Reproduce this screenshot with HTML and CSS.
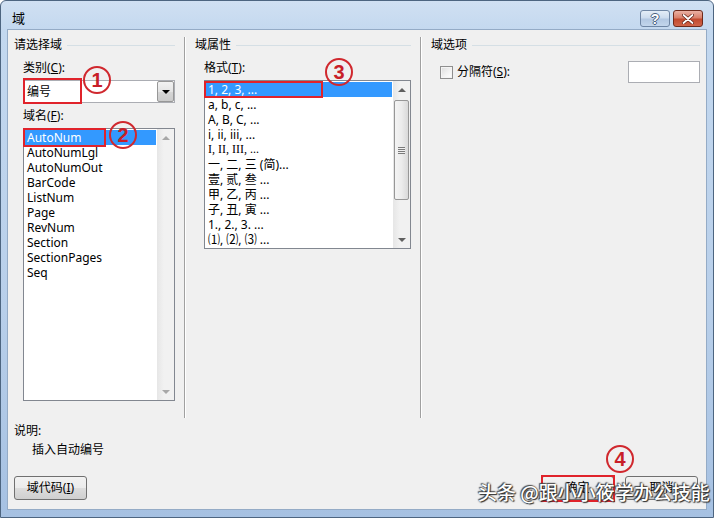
FILE: index.html
```html
<!DOCTYPE html>
<html lang="zh-CN">
<head>
<meta charset="utf-8">
<title>域</title>
<link rel="stylesheet" href="styles.css">
</head>
<body>
<div class="window">
  <div class="titlebar">
    <span class="title">域</span>
    <div class="caption">
      <span class="cbtn help">?</span>
      <span class="cbtn close">
        <svg width="12" height="10" viewBox="0 0 12 10"><path d="M1.5 1 L10.5 9 M10.5 1 L1.5 9" stroke="#5a1a10" stroke-width="3.2" stroke-linecap="round"/><path d="M1.5 1 L10.5 9 M10.5 1 L1.5 9" stroke="#fff" stroke-width="1.8" stroke-linecap="round"/></svg>
      </span>
    </div>
  </div>
  <div class="client">
    <div class="columns">
      <section class="col col1">
        <div class="group-head">请选择域</div>
        <div class="label">类别(<u>C</u>):</div>
        <div class="combo">
          <span class="combo-text">编号</span>
          <span class="combo-btn"><i class="arr-down dark"></i></span>
        </div>
        <div class="label label2">域名(<u>F</u>):</div>
        <div class="listbox names">
          <div class="items">
            <div class="item sel">AutoNum</div>
            <div class="item">AutoNumLgl</div>
            <div class="item">AutoNumOut</div>
            <div class="item">BarCode</div>
            <div class="item">ListNum</div>
            <div class="item">Page</div>
            <div class="item">RevNum</div>
            <div class="item">Section</div>
            <div class="item">SectionPages</div>
            <div class="item">Seq</div>
          </div>
          <div class="scrollbar">
            <span class="sb-btn"><i class="arr-up off"></i></span>
            <span class="track"></span>
            <span class="sb-btn"><i class="arr-down off"></i></span>
          </div>
        </div>
      </section>
      <div class="sep"></div>
      <section class="col col2">
        <div class="group-head">域属性</div>
        <div class="label">格式(<u>T</u>):</div>
        <div class="listbox formats">
          <div class="items">
            <div class="item sel">1, 2, 3, ...</div>
            <div class="item">a, b, c, ...</div>
            <div class="item">A, B, C, ...</div>
            <div class="item">i, ii, iii, ...</div>
            <div class="item serif">I, II, III, ...</div>
            <div class="item">一, 二, 三 (简)...</div>
            <div class="item">壹, 贰, 叁 ...</div>
            <div class="item">甲, 乙, 丙 ...</div>
            <div class="item">子, 丑, 寅 ...</div>
            <div class="item">1., 2., 3. ...</div>
            <div class="item">⑴, ⑵, ⑶ ...</div>
          </div>
          <div class="scrollbar">
            <span class="sb-btn"><i class="arr-up"></i></span>
            <span class="track"><span class="thumb"><i class="grip"></i></span></span>
            <span class="sb-btn"><i class="arr-down"></i></span>
          </div>
        </div>
      </section>
      <div class="sep"></div>
      <section class="col col3">
        <div class="group-head">域选项</div>
        <div class="option-row">
          <span class="checkbox"></span>
          <span class="opt-label">分隔符(<u>S</u>):</span>
          <span class="textbox"></span>
        </div>
      </section>
    </div>
    <div class="desc">
      <div>说明:</div>
      <div class="desc-text">插入自动编号</div>
    </div>
    <div class="buttons">
      <span class="btn">域代码(<u>I</u>)</span>
      <span class="spacer"></span>
      <span class="btn">确定</span>
      <span class="btn">取消</span>
    </div>
  </div>
</div>

<div class="rbox rb1"></div>
<div class="rbox rb2"></div>
<div class="rbox rb3"></div>
<div class="rbox rb4"></div>
<div class="mark m1">1</div>
<div class="mark m2">2</div>
<div class="mark m3">3</div>
<div class="mark m4">4</div>
<div class="watermark">头条 @跟小小筱学办公技能</div>
</body>
</html>
```

FILE: styles.css
```css
* { box-sizing: border-box; margin: 0; padding: 0; }
html, body { width: 714px; height: 518px; overflow: hidden; }
body {
  font-family: "Noto Sans", "Noto Sans CJK SC", sans-serif;
  font-size: 12px;
  color: #000;
  background: #fff;
}
u { text-decoration: underline; text-underline-offset: 1px; }

.window {
  width: 714px;
  height: 518px;
  display: flex;
  flex-direction: column;
  background: linear-gradient(180deg, #d0e0f2 0px, #c3d8ef 30px, #b8cfea 60%, #a6c1e2 100%);
  border: 1px solid #4d6580;
  border-radius: 6px 6px 0 0;
}

.titlebar {
  height: 29px;
  display: flex;
  align-items: flex-start;
  padding-left: 11px;
}
.title {
  margin-top: 9px;
  line-height: 16px;
  font-size: 13px;
  font-family: "Noto Sans CJK SC", sans-serif;
}
.caption {
  margin-left: auto;
  margin-top: 9px;
  margin-right: 10px;
  display: flex;
  gap: 3px;
}
.cbtn {
  width: 30px;
  height: 17px;
  border-radius: 3px;
  display: flex;
  align-items: center;
  justify-content: center;
}
.help {
  background: linear-gradient(180deg, #e4edf7 0%, #cddcee 45%, #b3c8e2 55%, #c3d6ec 100%);
  border: 1px solid #6f86a4;
  color: #ffffff;
  font: bold 14px/1 "Liberation Sans", sans-serif;
  text-shadow: 1px 0 0 #4a6280, -1px 0 0 #4a6280, 0 1px 0 #4a6280, 0 -1px 0 #4a6280;
}
.close {
  background: linear-gradient(180deg, #eab1a4 0%, #d9806b 45%, #c24a2f 55%, #d0654a 100%);
  border: 1px solid #6e2a1c;
}

.client {
  flex: 1;
  margin: 0 7px 8px;
  background: #f0f0f0;
  display: flex;
  flex-direction: column;
  box-shadow: 0 0 0 1px #94abc6;
}

.columns {
  display: flex;
  margin-top: 7px;
  height: 381px;
}
.col { display: flex; flex-direction: column; }
.col1 { width: 176px; padding: 0 9px 0 6px; }
.col2 { width: 235px; padding: 0 9px 0 10px; }
.col3 { flex: 1; padding: 0 6px 0 10px; }
.sep {
  width: 1px;
  background: #a0a0a0;
  box-shadow: 1px 0 0 #ffffff;
}

.group-head {
  display: flex;
  align-items: center;
  gap: 5px;
  line-height: 16px;
  white-space: nowrap;
}
.group-head::after {
  content: "";
  flex: 1;
  height: 1px;
  background: #d5dfe5;
}

.label {
  margin-top: 7px;
  padding-left: 9px;
  line-height: 16px;
}
.label2 { margin-top: 5px; }

.combo {
  margin-top: 4px;
  margin-left: 9px;
  height: 23px;
  border: 1px solid #abadb3;
  background: #fff;
  display: flex;
  align-items: stretch;
}
.combo-text {
  flex: 1;
  padding-left: 3px;
  line-height: 21px;
}
.combo-btn {
  width: 17px;
  display: flex;
  align-items: center;
  justify-content: center;
  background: linear-gradient(180deg, #f2f2f2 0%, #e4e4e4 50%, #d6d6d6 51%, #cbcbcb 100%);
  border: 1px solid #979797;
  border-radius: 2px;
}

.listbox {
  margin-top: 4px;
  margin-left: 9px;
  display: flex;
  border: 1px solid #828790;
  background: #fff;
}
.names { height: 273px; }
.formats { height: 169px; }
.items {
  flex: 1;
  padding: 1px;
  min-width: 0;
}
.item {
  height: 15px;
  line-height: 15px;
  padding-left: 2px;
  white-space: nowrap;
}
.item.sel { background: #3399ff; color: #fff; }
.item.serif { font-family: "Liberation Serif", serif; }

.scrollbar {
  width: 17px;
  display: flex;
  flex-direction: column;
  background: linear-gradient(90deg, #e6e6e6 0%, #f1f1f1 40%, #f1f1f1 100%);
}
.sb-btn {
  height: 17px;
  display: flex;
  align-items: center;
  justify-content: center;
}
.track { flex: 1; display: flex; flex-direction: column; }
.thumb {
  margin: 2px 1px 0 1px;
  height: 100px;
  border: 1px solid #979797;
  border-radius: 2px;
  background: linear-gradient(90deg, #f4f4f4 0%, #ececec 50%, #d9d9d9 100%);
  display: flex;
  align-items: center;
  justify-content: center;
}
.grip {
  width: 7px;
  height: 7px;
  background: repeating-linear-gradient(180deg, #7a7a7a 0 1px, #f0f0f0 1px 2px);
}
.arr-up, .arr-down {
  width: 0;
  height: 0;
  border-left: 4px solid transparent;
  border-right: 4px solid transparent;
}
.arr-up { border-bottom: 4px solid #606060; }
.arr-down { border-top: 4px solid #606060; }
.arr-up.off { border-bottom-color: #a8a8a8; }
.arr-down.off { border-top-color: #a8a8a8; }
.arr-down.dark { border-top-color: #000; }

.option-row {
  margin-top: 8px;
  padding-left: 9px;
  height: 22px;
  display: flex;
  align-items: center;
}
.checkbox {
  width: 13px;
  height: 13px;
  border: 1px solid #8f8f8f;
  background: linear-gradient(135deg, #dcdcdc 0%, #f4f4f4 60%, #ffffff 100%);
  box-shadow: inset 0 0 0 1px #f4f4f4;
}
.opt-label { margin-left: 4px; line-height: 16px; }
.textbox {
  margin-left: auto;
  width: 72px;
  height: 22px;
  border: 1px solid #abadb3;
  background: #fff;
}

.desc {
  margin-top: 5px;
  padding-left: 6px;
  line-height: 16px;
}
.desc-text {
  margin-top: 3px;
  padding-left: 18px;
}

.buttons {
  display: flex;
  gap: 11px;
  margin-top: 18px;
  padding: 0 8px 0 6px;
  height: 24px;
}
.spacer { flex: 1; margin-left: -11px; }
.btn {
  width: 73px;
  height: 24px;
  border: 1px solid #707070;
  border-radius: 3px;
  background: linear-gradient(180deg, #f2f2f2 0%, #ebebeb 50%, #dddddd 51%, #cfcfcf 100%);
  display: flex;
  align-items: center;
  justify-content: center;
  line-height: 16px;
}

/* annotations drawn over the screenshot */
.rbox {
  position: absolute;
  border: 2px solid #e0232b;
}
.rb1 { left: 23px; top: 78px; width: 59px; height: 26px; }
.rb2 { left: 23px; top: 128px; width: 83px; height: 19px; }
.rb3 { left: 204px; top: 81px; width: 119px; height: 17px; }
.rb4 { left: 541px; top: 475px; width: 74px; height: 27px; }

.mark {
  position: absolute;
  width: 28px;
  height: 28px;
  border: 2px solid #d0282e;
  border-radius: 50%;
  color: #c81e28;
  font: bold 20px/1 "Liberation Sans", sans-serif;
  display: flex;
  align-items: center;
  justify-content: center;
}
.m1 { left: 83px; top: 66px; }
.m2 { left: 109px; top: 121px; }
.m3 { left: 325px; top: 58px; }
.m4 { left: 606px; top: 445px; }

.watermark {
  position: absolute;
  left: 478px;
  top: 482px;
  font-family: "Noto Sans CJK SC", sans-serif;
  font-size: 19px;
  line-height: 20px;
  font-weight: 500;
  color: #fff;
  white-space: nowrap;
  text-shadow: 0 0 2px #222, 1px 1px 1px #333, -1px -1px 1px #555;
}
```
